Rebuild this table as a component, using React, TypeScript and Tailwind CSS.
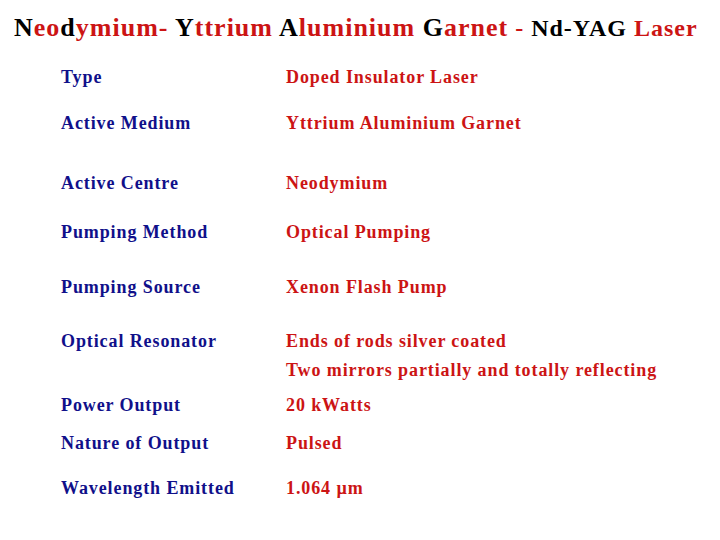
import React from "react";

const R = "text-[#cc1414]";
const K = "text-black";

const rows: { label: string; value: string[]; mt: string; lh: string }[] = [
  { label: "Type", value: ["Doped Insulator Laser"], mt: "mt-[11px]", lh: "leading-[20px]" },
  { label: "Active Medium", value: ["Yttrium Aluminium Garnet"], mt: "mt-[26px]", lh: "leading-[20px]" },
  { label: "Active Centre", value: ["Neodymium"], mt: "mt-[40px]", lh: "leading-[20px]" },
  { label: "Pumping Method", value: ["Optical Pumping"], mt: "mt-[29px]", lh: "leading-[20px]" },
  { label: "Pumping Source", value: ["Xenon Flash Pump"], mt: "mt-[35px]", lh: "leading-[20px]" },
  {
    label: "Optical Resonator",
    value: ["Ends of rods silver coated", "Two mirrors partially and totally reflecting"],
    mt: "mt-[30px]",
    lh: "leading-[29px]",
  },
  { label: "Power Output", value: ["20 kWatts"], mt: "mt-[10px]", lh: "leading-[20px]" },
  { label: "Nature of Output", value: ["Pulsed"], mt: "mt-[18px]", lh: "leading-[20px]" },
  { label: "Wavelength Emitted", value: ["1.064 µm"], mt: "mt-[25px]", lh: "leading-[20px]" },
];

export default function App() {
  return (
    <div
      className="w-[720px] h-[540px] bg-white overflow-hidden"
      style={{ fontFamily: '"Liberation Serif", "Times New Roman", serif' }}
    >
      <div className="h-[56px] pl-[14px] leading-[56px] whitespace-nowrap font-bold tracking-[1px]">
        <span className="text-[26px]">
          <span className={K}>N</span>
          <span className={R}>eo</span>
          <span className={K}>d</span>
          <span className={R}>ymium- </span>
          <span className={K}>Y</span>
          <span className={R}>ttrium </span>
          <span className={K}>A</span>
          <span className={R}>luminium </span>
          <span className={K}>G</span>
          <span className={R}>arnet</span>
        </span>
        <span className="text-[24px]">
          <span className={R}> - </span>
          <span className={K}>Nd-YAG </span>
          <span className={R}>Laser</span>
        </span>
      </div>
      {rows.map((r) => (
        <div key={r.label} className={`flex ${r.mt} ${r.lh} text-[18px] font-bold tracking-[0.9px]`}>
          <div className="w-[286px] pl-[61px] text-[#10108a]">{r.label}</div>
          <div className={`${R} flex flex-col`}>
            {r.value.map((v) => (
              <div key={v}>{v}</div>
            ))}
          </div>
        </div>
      ))}
    </div>
  );
}
